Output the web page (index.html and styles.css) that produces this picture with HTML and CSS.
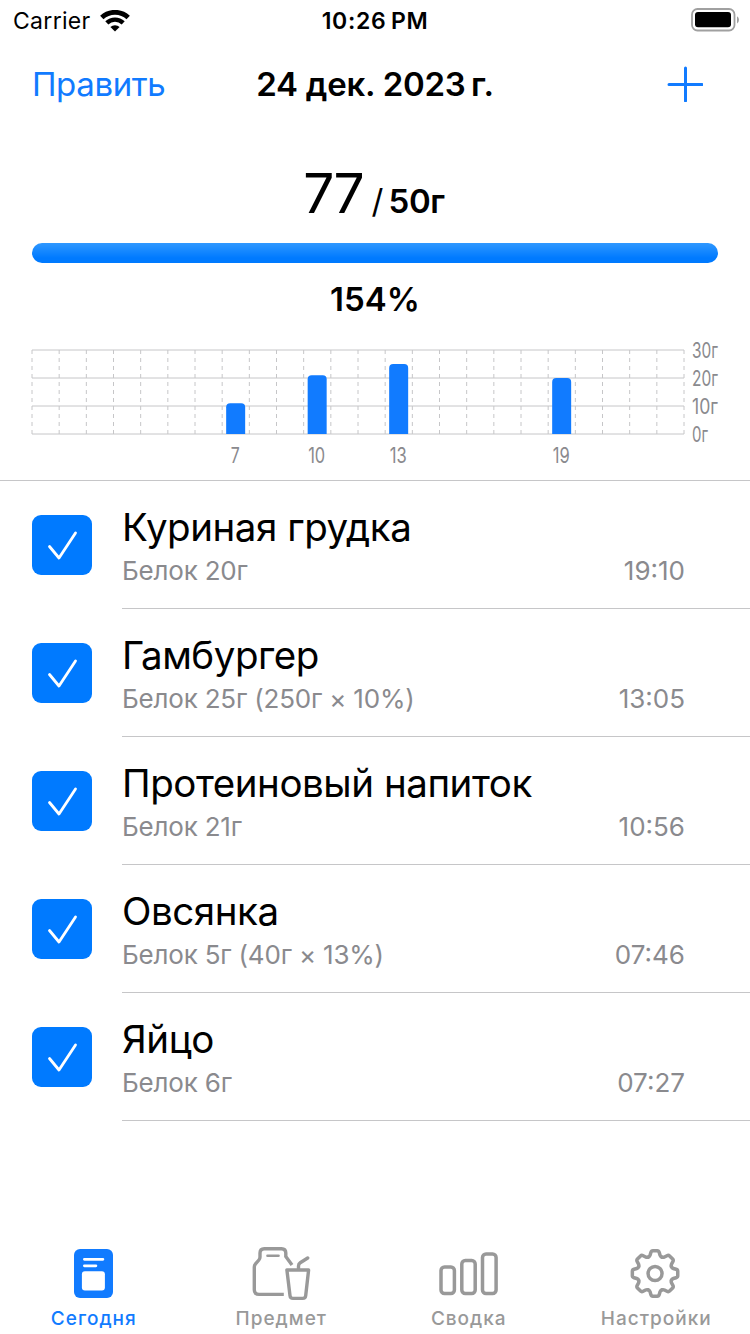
FILE: index.html
```
<!DOCTYPE html>
<html lang="ru">
<head>
  <meta charset="UTF-8">
  <meta name="viewport" content="width=device-width, initial-scale=1.0">
  <title>Белок</title>
  <link rel="stylesheet" href="styles.css">
</head>
<body>
  <div class="status-bar">
    <div class="carrier">
      <span>Carrier</span>
      <svg width="30" height="22" viewBox="0 0 30 22">
        <path d="M1.8 7.6a19 19 0 0 1 26.4 0" fill="none" stroke="#000" stroke-width="4.8"/>
        <path d="M6.8 12.9a11.8 11.8 0 0 1 16.4 0" fill="none" stroke="#000" stroke-width="4.4"/>
        <path d="M15 21.5l-4.6-4.4a6.5 6.5 0 0 1 9.2 0z"/>
      </svg>
    </div>
    <span class="clock">10:26&#8239;PM</span>
    <svg class="battery" width="50" height="24" viewBox="0 0 50 24">
      <rect x="1" y="1" width="42.5" height="21.5" rx="5.5" fill="none" stroke="#a0a0a0" stroke-width="1.8"/>
      <rect x="4" y="4" width="36" height="15.3" rx="3"/>
      <path d="M46 8.2q2 1 2 3.6t-2 3.6z" fill="#a0a0a0"/>
    </svg>
  </div>

  <header class="nav">
    <a class="edit">Править</a>
    <h1>24 дек. 2023&#8239;г.</h1>
    <svg class="add" width="36" height="36" viewBox="0 0 36 36">
      <path d="M18.5 2v33M2 18.5h33" stroke="#117bff" stroke-width="3" stroke-linecap="round"/>
    </svg>
  </header>

  <section class="summary">
    <div class="total"><span class="value">77</span><span class="slash">/</span><span class="goal">50г</span></div>
    <div class="progress"></div>
    <div class="percent">154%</div>
    <svg class="chart" width="750" height="140" viewBox="0 340 750 140">
      <g id="grid" stroke="#c6c6c8"></g>
      <g id="bars" fill="#117bff"></g>
      <g id="labels" class="labels"></g>
    </svg>
  </section>

  <ul class="list">
    <li>
      <span class="check"><svg width="60" height="60"><path d="M17.5 31.5l9.5 11.5 16.5-25"/></svg></span>
      <div class="item">
        <h2>Куриная грудка</h2>
        <p><span>Белок 20г</span><time>19:10</time></p>
      </div>
    </li>
    <li>
      <span class="check"><svg width="60" height="60"><path d="M17.5 31.5l9.5 11.5 16.5-25"/></svg></span>
      <div class="item">
        <h2>Гамбургер</h2>
        <p><span>Белок 25г (250г × 10%)</span><time>13:05</time></p>
      </div>
    </li>
    <li>
      <span class="check"><svg width="60" height="60"><path d="M17.5 31.5l9.5 11.5 16.5-25"/></svg></span>
      <div class="item">
        <h2>Протеиновый напиток</h2>
        <p><span>Белок 21г</span><time>10:56</time></p>
      </div>
    </li>
    <li>
      <span class="check"><svg width="60" height="60"><path d="M17.5 31.5l9.5 11.5 16.5-25"/></svg></span>
      <div class="item">
        <h2>Овсянка</h2>
        <p><span>Белок 5г (40г × 13%)</span><time>07:46</time></p>
      </div>
    </li>
    <li>
      <span class="check"><svg width="60" height="60"><path d="M17.5 31.5l9.5 11.5 16.5-25"/></svg></span>
      <div class="item">
        <h2>Яйцо</h2>
        <p><span>Белок 6г</span><time>07:27</time></p>
      </div>
    </li>
  </ul>

  <nav class="tabs">
    <a class="tab active">
      <svg width="60" height="60" viewBox="0 0 60 60">
        <rect x="10" y="6" width="39" height="49" rx="6" fill="#117bff"/>
        <path d="M20.4 16.3H38.9M20.4 22.8H31.9" stroke="#fff" stroke-width="2.8" stroke-linecap="round"/>
        <rect x="17.9" y="28.3" width="23" height="19.3" rx="3" fill="#fff"/>
      </svg>
      <span>Сегодня</span>
    </a>
    <a class="tab">
      <svg width="60" height="60" viewBox="0 0 60 60" fill="none" stroke="#999" stroke-width="3.4">
        <path d="M32.8 51.4H8Q3.3 51.4 3.3 46.7V24Q3.3 22.3 4.5 20.9L7.9 17Q9 15.7 9 14V10Q9 5.7 13.3 5.7H30.5Q34.8 5.7 34.8 10V13.5L41 22"/>
        <path d="M16.5 12.7H27.5" stroke-width="2.6" stroke-linecap="round"/>
        <path d="M35.9 27H57.6L54.7 52.6Q54.4 55.4 51.7 55.4H42Q39.3 55.4 39 52.6ZM47.5 27V23Q47.5 20.9 49.2 19.8L56.7 15" stroke-linecap="round" stroke-linejoin="round"/>
      </svg>
      <span>Предмет</span>
    </a>
    <a class="tab">
      <svg width="60" height="60" viewBox="0 0 60 60" fill="none" stroke="#999" stroke-width="3.5">
        <rect x="2" y="23.9" width="13.4" height="26.6" rx="3.5"/>
        <rect x="22.8" y="17.4" width="13.4" height="33.1" rx="3.5"/>
        <rect x="43.5" y="10.9" width="13.6" height="39.6" rx="3.5"/>
      </svg>
      <span>Сводка</span>
    </a>
    <a class="tab">
      <svg width="60" height="60" viewBox="-29.05 -30.5 60 60" fill="none" stroke="#999" stroke-width="3.5" stroke-linecap="round">
        <path id="tooth" d="M-6.8-16.4Q-5.4-17-5-18.3L-4.2-21Q-3.7-22.7-2.2-22.7H2.2Q3.7-22.7 4.2-21L5-18.3Q5.4-17 6.8-16.4"/>
        <use href="#tooth" transform="rotate(45)"/>
        <use href="#tooth" transform="rotate(90)"/>
        <use href="#tooth" transform="rotate(135)"/>
        <use href="#tooth" transform="rotate(180)"/>
        <use href="#tooth" transform="rotate(225)"/>
        <use href="#tooth" transform="rotate(270)"/>
        <use href="#tooth" transform="rotate(315)"/>
        <circle r="7"/>
      </svg>
      <span>Настройки</span>
    </a>
  </nav>

  <script src="chart.js"></script>
</body>
</html>
```
FILE: styles.css
```
* {
  box-sizing: border-box;
}
body {
  margin: 0;
  height: 1334px;
  display: flex;
  flex-direction: column;
  background: #fff;
  color: #000;
  font-family: Inter, "Liberation Sans", sans-serif;
  overflow: hidden;
}
h1, h2, p, ul {
  margin: 0;
  padding: 0;
}
svg {
  display: block;
  flex-shrink: 0;
}

.status-bar {
  display: grid;
  grid-template-columns: 1fr auto 1fr;
  align-items: center;
  height: 40px;
  padding: 0 9px 0 13px;
  font-size: 23px;
  line-height: 42px;
}
.carrier {
  display: flex;
  align-items: center;
  gap: 9px;
  letter-spacing: 0.3px;
}
.clock {
  font-weight: 600;
  letter-spacing: 0.7px;
  margin-right: 4px;
}
.battery {
  justify-self: end;
  margin-bottom: 2px;
}

.nav {
  display: grid;
  grid-template-columns: 1fr auto 1fr;
  align-items: center;
  height: 88px;
  padding: 0 32px;
}
.nav h1 {
  font-size: 33px;
  font-weight: 600;
  letter-spacing: -0.25px;
}
.edit {
  color: #117bff;
  font-size: 33px;
  letter-spacing: -0.4px;
}
.add {
  justify-self: end;
  margin-right: 15px;
}

.summary {
  height: 353px;
  border-bottom: 1px solid #c6c6c8;
}
.total {
  display: flex;
  justify-content: center;
  align-items: baseline;
  height: 115px;
  padding-top: 32px;
}
.value {
  font-size: 55px;
  letter-spacing: -2px;
}
.slash {
  font-size: 33px;
  margin: 0 5px 0 9px;
}
.goal {
  font-size: 33px;
  font-weight: 600;
  letter-spacing: -0.3px;
  margin-right: 2px;
}
.progress {
  height: 20px;
  margin: 0 32px;
  border-radius: 10px;
  background: linear-gradient(#2f98ff, #007aff 75%);
}
.percent {
  height: 77px;
  line-height: 72px;
  text-align: center;
  font-size: 33px;
  font-weight: 600;
}
.chart {
  overflow: visible;
}
.labels {
  fill: #8a8a8e;
  font-size: 21px;
}

.list {
  list-style: none;
}
.list li {
  display: flex;
  height: 128px;
  padding-left: 32px;
}
.check {
  width: 60px;
  height: 60px;
  margin: 34px 30px 0 0;
  border-radius: 9px;
  background: #007aff;
}
.check path {
  fill: none;
  stroke: #fff;
  stroke-width: 2.8;
  stroke-linecap: round;
  stroke-linejoin: round;
}
.item {
  flex: 1;
  padding: 21px 65px 0 0;
  border-bottom: 1px solid #c6c6c8;
}
.item h2 {
  font-size: 38.5px;
  font-weight: 400;
  line-height: 50px;
  letter-spacing: -0.45px;
}
.item p {
  display: flex;
  justify-content: space-between;
  color: #8a8a8e;
  font-size: 26px;
  line-height: 38px;
  letter-spacing: -0.2px;
}
.item time {
  letter-spacing: 0;
}

.tabs {
  display: flex;
  margin-top: auto;
  height: 98px;
}
.tab {
  flex: 1;
  display: flex;
  flex-direction: column;
  align-items: center;
  padding-top: 7px;
  color: #999;
  font-size: 19px;
  font-weight: 500;
  line-height: 32px;
  letter-spacing: 1px;
}
.tab.active {
  color: #117bff;
}
```
FILE: chart.js
```
const intake = { 7: 11, 10: 21, 13: 25, 19: 20 };
const left = 32, bottom = 434, step = 652 / 24;
let grid = '', bars = '', labels = '';

for (let g = 0; g <= 30; g += 10) {
  const y = bottom - g * 2.8;
  grid += `<path d="M${left} ${y}h652"/>`;
  labels += `<text x="692" y="${y + 8}" textLength="${g ? 26 : 16}" lengthAdjust="spacingAndGlyphs">${g}г</text>`;
}
for (let h = 0; h <= 24; h++) {
  grid += `<path d="M${left + h * step} 350v84" stroke-dasharray="4 4"/>`;
}
for (const h in intake) {
  const x = left + h * step + 4;
  const top = bottom - intake[h] * 2.8;
  bars += `<path d="M${x} ${bottom}V${top + 4}q0-4 4-4h11q4 0 4 4V${bottom}z"/>`;
  labels += `<text x="${x + 9}" y="463" text-anchor="middle" textLength="${h > 9 ? 17 : 9}" lengthAdjust="spacingAndGlyphs">${h}</text>`;
}

document.getElementById('grid').innerHTML = grid;
document.getElementById('bars').innerHTML = bars;
document.getElementById('labels').innerHTML = labels;
```
